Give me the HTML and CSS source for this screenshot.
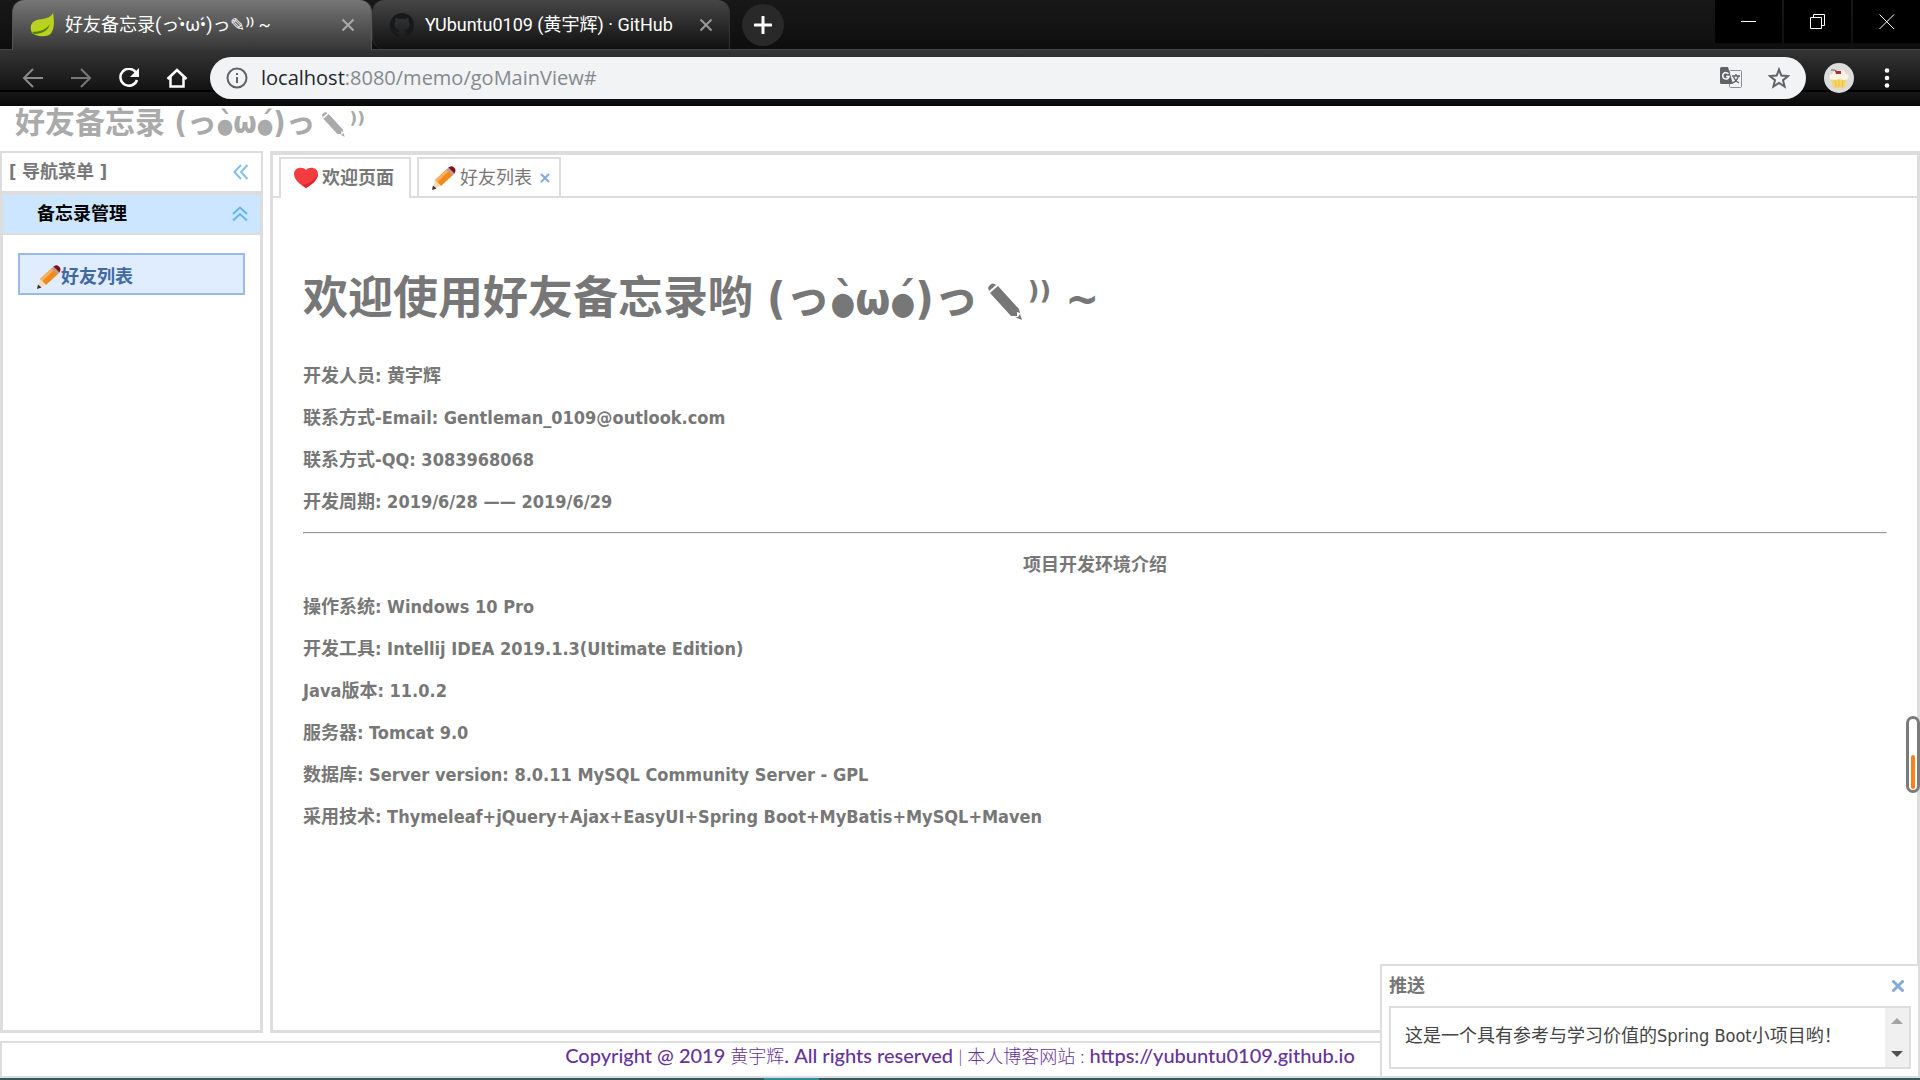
FILE: index.html
```
<!DOCTYPE html>
<html lang="zh-CN">
<head>
  <meta charset="UTF-8" />
  <title>好友备忘录</title>
  <link rel="stylesheet" href="styles.css">
</head>
<body>
  <svg class="defs">
    <symbol id="pencil" viewBox="0 0 24 24">
      <path d="M3 14 L15 3 L21 9 L9 20 Z" fill="#f08a1c"/>
      <path d="M3 14 L15 3 L17 5 L5 16.500 Z" fill="#f8b060"/>
      <path d="M3 14 L9 20 L1 23 Z" fill="#f8dcb4"/>
      <path d="M1 19.500 L4.500 22.500 L0 24 Z" fill="#3a2c30"/>
      <path d="M16 2 Q19 -1 22 1.500 Q25 4 22 8 Z" fill="#7d1216"/>
      <path d="M14.500 3.500 L16.500 1.500 L22.500 7.500 L20.500 9.500 Z" fill="#c49a94"/>
    </symbol>
    <symbol id="pencil-solid" viewBox="0 0 45 45">
      <path fill="currentColor" d="M10 11 Q8 7 11 5 Q14 2 17 5 Z M11 13 L19 6 L40 29 L41 33 L38 32 L38 36 L34 36 L32 36 Z M36 37 L39 37 L41 34 L43 40 Z"/>
    </symbol>
  </svg>

  <header class="browser">
    <div class="tab-strip">
      <div class="browser-tab active">
        <svg class="favicon" viewBox="0 0 24 24">
          <path d="M23 0 C25 10 24 20 18 22.500 C12 24 5 23 2 20 C-1 14 1 8 9 6.500 C16 5.500 20 5 23 0 Z" fill="#b9d21f"/>
          <path d="M2 19 C10 19 17 16 20 11 C18 19 10 21 4 21 Z" fill="#567f12"/>
        </svg>
        <span class="browser-title">好友备忘录(っ•̀ω•́)っ✎⁾⁾ ~</span>
        <button class="icon-button" aria-label="关闭标签页">
          <svg width="14" height="14" viewBox="0 0 14 14"><path d="M1.500 1.500 L12.500 12.500 M12.500 1.500 L1.500 12.500" stroke="#aaa" stroke-width="2"/></svg>
        </button>
      </div>
      <div class="browser-tab">
        <svg class="favicon" viewBox="0 0 16 16">
          <path fill="#17191b" d="M8 0C3.580 0 0 3.580 0 8c0 3.540 2.290 6.530 5.470 7.590.4.070.550-.170.550-.380 0-.190-.010-.820-.010-1.490-2.010.370-2.530-.490-2.690-.940-.090-.230-.480-.940-.820-1.130-.280-.150-.680-.520-.010-.530.630-.010 1.080.580 1.230.820.720 1.210 1.870.870 2.330.660.070-.520.280-.870.510-1.070-1.780-.2-3.640-.890-3.640-3.950 0-.870.310-1.590.820-2.150-.080-.2-.360-1.020.080-2.120 0 0 .670-.210 2.200.820.640-.180 1.320-.270 2-.270s1.360.090 2 .270c1.530-1.040 2.200-.820 2.200-.820.440 1.100.160 1.920.080 2.120.510.560.820 1.270.820 2.150 0 3.070-1.870 3.750-3.650 3.950.290.250.540.730.540 1.480 0 1.070-.010 1.930-.010 2.200 0 .210.150.460.550.380A8 8 0 0 0 16 8c0-4.420-3.580-8-8-8z"/>
        </svg>
        <span class="browser-title">YUbuntu0109 (黄宇辉) · GitHub</span>
        <button class="icon-button" aria-label="关闭标签页">
          <svg width="14" height="14" viewBox="0 0 14 14"><path d="M1.500 1.500 L12.500 12.500 M12.500 1.500 L1.500 12.500" stroke="#999" stroke-width="2"/></svg>
        </button>
      </div>
      <button class="new-tab" aria-label="新标签页">
        <svg width="18" height="18" viewBox="0 0 18 18"><path d="M9 1 V17 M1 9 H17" stroke="#fff" stroke-width="3" stroke-linecap="round"/></svg>
      </button>
      <div class="window-controls">
        <button aria-label="最小化"><svg width="16" height="16" viewBox="0 0 16 16"><path d="M0 7.500 H15" stroke="#fff"/></svg></button>
        <button aria-label="还原"><svg width="16" height="16" viewBox="0 0 16 16" fill="none" stroke="#fff"><path d="M0.500 3.500 H11.500 V14.500 H0.500 Z M3.500 3.500 V0.500 H14.500 V11.500 H11.500"/></svg></button>
        <button aria-label="关闭"><svg width="16" height="16" viewBox="0 0 16 16"><path d="M0.500 0.500 L15 15 M15 0.500 L0.500 15" stroke="#fff"/></svg></button>
      </div>
    </div>
    <div class="toolbar">
      <div class="tools">
        <button aria-label="后退"><svg width="22" height="20" viewBox="0 0 22 20" fill="none" stroke="#8a8a8a" stroke-width="2"><path d="M21 10 H2 M11 1 L2 10 L11 19"/></svg></button>
        <button aria-label="前进"><svg width="22" height="20" viewBox="0 0 22 20" fill="none" stroke="#777" stroke-width="2"><path d="M1 10 H20 M11 1 L20 10 L11 19"/></svg></button>
        <button aria-label="刷新"><svg width="22" height="20" viewBox="0 0 22 20"><path d="M18 4.500 A8.500 8.500 0 1 0 19 12" fill="none" stroke="#fff" stroke-width="2.500"/><path d="M21 0 V9 H12 Z" fill="#fff"/></svg></button>
        <button aria-label="主页"><svg width="22" height="20" viewBox="0 0 22 20" fill="none" stroke="#fff" stroke-width="2.500"><path d="M1.500 11 L11 2 L20.500 11 M4.500 9 V18.500 H17.500 V9"/></svg></button>
      </div>
      <div class="address">
        <svg width="22" height="22" viewBox="0 0 22 22"><circle cx="11" cy="11" r="9.500" fill="none" stroke="#5f6368" stroke-width="2"/><path d="M11 10 V16 M11 6 V8" stroke="#5f6368" stroke-width="2"/></svg>
        <div class="url"><span class="host">localhost</span>:8080/memo/goMainView#</div>
        <button class="icon-button" aria-label="翻译此页">
          <svg width="22" height="22" viewBox="0 0 22 22">
            <rect x="9.500" y="3.500" width="12" height="17" rx="1" fill="#f1f3f4" stroke="#8a8d91"/>
            <path d="M1.500 0 H8 L13 17 H1.500 Q0 17 0 15.500 V1.500 Q0 0 1.500 0 Z" fill="#5f6368"/>
            <path d="M8.500 7 A3.200 3.200 0 1 0 9 9.500 H6" fill="none" stroke="#fff" stroke-width="1.500"/>
            <path d="M12 9 H20 M16 7 V9 M18.500 9 Q17 14 12.500 16 M13.500 10 Q15 14 19 16" fill="none" stroke="#5f6368" stroke-width="1.300"/>
          </svg>
        </button>
        <button class="icon-button" aria-label="为此网页添加书签">
          <svg width="22" height="22" viewBox="0 0 22 22"><path d="M11 2.500 L13.300 8.500 L20 9 L15 13.200 L16.600 19.500 L11 16 L5.400 19.500 L7 13.200 L2 9 L8.700 8.500 Z" fill="none" stroke="#5f6368" stroke-width="2"/></svg>
        </button>
      </div>
      <button class="avatar" aria-label="用户">
        <svg width="30" height="30" viewBox="0 0 30 30">
          <circle cx="15" cy="15" r="15" fill="#dcdcdc"/>
          <path d="M7 16 H23 L20.500 25 H9.500 Z" fill="#f3d768"/>
          <path d="M11 17 L12 24 M15 17 V24 M19 17 L18 24" stroke="#e9bf45"/>
          <path d="M6 16 Q4 12 8 11 Q10 7 15 7 Q21 7 22 11 Q26 12 24 16 Q20 18 15 16 Q10 18 6 16 Z" fill="#fff3e4"/>
          <path d="M11 8 H17 V11 H12 Z" fill="#b92a35"/>
          <path d="M7 7 Q11 6 14 9" fill="none" stroke="#76544c"/>
        </svg>
      </button>
      <button aria-label="菜单"><svg width="6" height="20" viewBox="0 0 6 20" fill="#fff"><circle cx="3" cy="2.500" r="2.300"/><circle cx="3" cy="10" r="2.300"/><circle cx="3" cy="17.500" r="2.300"/></svg></button>
    </div>
  </header>

  <div class="page">
    <h1 class="page-title">好友备忘录 (っ<span class="eye">●</span>&#768;ω<span class="eye">●</span>&#769;)っ<svg class="pencil-solid"><use href="#pencil-solid"/></svg>⁾⁾</h1>

    <div class="layout">
      <nav class="west">
        <div class="panel-header">
          <span>[ 导航菜单 ]</span>
          <button class="icon-button" aria-label="折叠菜单">
            <svg width="16" height="16" viewBox="0 0 16 16" fill="none" stroke="#7fc1f2" stroke-width="2"><path d="M8 1 L1.500 8 L8 15 M14.500 1 L8 8 L14.500 15"/></svg>
          </button>
        </div>
        <div class="accordion">
          <div class="accordion-header">
            <span>备忘录管理</span>
            <button class="icon-button" aria-label="收起">
              <svg width="16" height="16" viewBox="0 0 16 16" fill="none" stroke="#66b4f0" stroke-width="2"><path d="M1 8 L8 1.500 L15 8 M1 14.500 L8 8 L15 14.500"/></svg>
            </button>
          </div>
          <a class="nav-link" href="#"><svg class="icon"><use href="#pencil"/></svg>好友列表</a>
        </div>
      </nav>

      <main class="center">
        <div class="tabs">
          <button class="tab selected">
            <svg class="icon" viewBox="0 0 24 24"><path d="M12 22 C5 18 0 13 0 8 C0 1 9 0 12 4 C15 0 24 1 24 8 C24 13 19 18 12 22 Z" fill="#f23c40"/><path d="M12 22 C19 18 24 13 24 8 C21 14 15 18 8 19 Z" fill="#dc2630"/></svg>
            欢迎页面
          </button>
          <button class="tab">
            <svg class="icon"><use href="#pencil"/></svg>
            好友列表
            <svg class="tab-close" width="10" height="10" viewBox="0 0 10 10"><path d="M1 1 L9 9 M9 1 L1 9" stroke="#85a9dc" stroke-width="2"/></svg>
          </button>
        </div>
        <div class="content">
          <h1>欢迎使用好友备忘录哟 (っ<span class="eye">●</span>&#768;ω<span class="eye">●</span>&#769;)っ<svg class="pencil-solid"><use href="#pencil-solid"/></svg>⁾⁾ ~</h1>
          <p>开发人员: 黄宇辉</p>
          <p>联系方式-Email: Gentleman_0109@outlook.com</p>
          <p>联系方式-QQ: 3083968068</p>
          <p>开发周期: 2019/6/28 —— 2019/6/29</p>
          <hr>
          <p class="section-title">项目开发环境介绍</p>
          <p>操作系统: Windows 10 Pro</p>
          <p>开发工具: Intellij IDEA 2019.1.3(UItimate Edition)</p>
          <p>Java版本: 11.0.2</p>
          <p>服务器: Tomcat 9.0</p>
          <p>数据库: Server version: 8.0.11 MySQL Community Server - GPL</p>
          <p>采用技术: Thymeleaf+jQuery+Ajax+EasyUI+Spring Boot+MyBatis+MySQL+Maven</p>
        </div>
      </main>
    </div>

    <footer class="footer">
      <a href="#">Copyright @ 2019 <span class="thin">黄宇辉</span>. All rights reserved <span class="thin">| 本人博客网站 :</span> https://yubuntu0109.github.io</a>
    </footer>

    <section class="message">
      <div class="message-header">
        <span>推送</span>
        <button class="icon-button" aria-label="关闭">
          <svg width="12" height="12" viewBox="0 0 12 12"><path d="M1.500 1.500 L10.500 10.500 M10.500 1.500 L1.500 10.500" stroke="#85a9dc" stroke-width="3" stroke-linecap="round"/></svg>
        </button>
      </div>
      <div class="message-body">
        <p>这是一个具有参考与学习价值的Spring Boot小项目哟！</p>
        <div class="scroller">
          <button class="icon-button" aria-label="向上滚动"><svg width="12" height="6" viewBox="0 0 12 6"><path d="M0 6 L6 0 L12 6 Z" fill="#a3a3a3"/></svg></button>
          <button class="icon-button" aria-label="向下滚动"><svg width="12" height="6" viewBox="0 0 12 6"><path d="M0 0 H12 L6 6 Z" fill="#505050"/></svg></button>
        </div>
      </div>
    </section>

    <div class="gauge"><div class="gauge-fill"></div></div>
  </div>

  <div class="taskbar"><div class="taskbar-active"></div></div>
</body>
</html>
```
FILE: styles.css
```
* {
  box-sizing: border-box;
}

body {
  display: flex;
  flex-direction: column;
  height: 100vh;
  margin: 0;
  overflow: hidden;
  background: #fff;
  color: #777;
  font-family: "DejaVu Sans Condensed", "Noto Sans CJK SC", sans-serif;
  font-size: 18px;
  line-height: 24px;
}

button {
  padding: 0;
  border: none;
  background: none;
  color: inherit;
  font: inherit;
  cursor: pointer;
}

svg {
  display: block;
  flex: none;
}

.defs {
  position: absolute;
  width: 0;
  height: 0;
}

.icon,
.favicon {
  width: 24px;
  height: 24px;
}

.pencil-solid {
  display: inline-block;
  width: 1em;
  height: 1em;
  margin-right: 4px;
  vertical-align: text-bottom;
}

.eye {
  font-size: 70%;
  line-height: 0;
}

.icon-button {
  display: flex;
}

/* browser window */
.browser {
  flex: none;
  background: #111;
}

.tab-strip {
  display: flex;
  height: 50px;
  padding-left: 12px;
  background: linear-gradient(#181818, #0e0e0e);
  border-bottom: 1px solid #444;
}

.browser-tab {
  display: flex;
  align-items: center;
  gap: 11px;
  width: 358px;
  height: 49px;
  padding: 0 16px 0 17px;
  border: 1px solid #333;
  border-width: 0 1px;
  border-radius: 12px 12px 0 12px;
  background: linear-gradient(#464646, #101010);
  color: #fff;
}

.browser-tab.active {
  width: 360px;
  height: 50px;
  border-color: #555;
  border-radius: 12px 12px 0 0;
  background: linear-gradient(#767676, #363636);
}

.browser-title {
  flex: 1;
  font-family: Roboto, "Noto Sans CJK SC", sans-serif;
  white-space: nowrap;
}

.new-tab {
  display: flex;
  align-items: center;
  justify-content: center;
  width: 42px;
  height: 42px;
  margin: 4px 0 0 12px;
  border-radius: 50%;
  background: #292929;
}

.window-controls {
  display: flex;
  gap: 2px;
  height: 43px;
  margin-left: auto;
}

.window-controls button {
  display: flex;
  align-items: center;
  justify-content: center;
  width: 67px;
  background: #000;
}

.toolbar {
  display: flex;
  align-items: center;
  height: 56px;
  padding: 0 30px 0 22px;
  background: linear-gradient(#343434, #131313 40px, #000 40px, #000 42px, #171717 42px, #080808);
}

.tools {
  display: flex;
  gap: 26px;
  margin-right: 22px;
}

.address {
  display: flex;
  flex: 1;
  align-items: center;
  gap: 26px;
  height: 42px;
  margin-right: 18px;
  padding: 0 16px;
  border-radius: 21px;
  background: #f1f3f5;
}

.address > svg {
  margin-right: -13px;
}

.url {
  flex: 1;
  color: #85898d;
  font-family: "Open Sans", sans-serif;
  font-size: 20px;
}

.host {
  color: #24272b;
}

.avatar {
  margin-right: 30px;
}

/* page */
.page {
  position: relative;
  display: flex;
  flex: 1;
  flex-direction: column;
  min-height: 0;
}

.page-title {
  height: 45px;
  margin: 0;
  padding-left: 15px;
  color: #aaa;
  font-size: 30px;
  line-height: 34px;
  white-space: nowrap;
}

.layout {
  display: flex;
  flex: 1;
  gap: 7px;
  min-height: 0;
}

.west {
  display: flex;
  flex-direction: column;
  width: 263px;
}

.panel-header {
  display: flex;
  align-items: center;
  justify-content: space-between;
  height: 42px;
  padding: 0 12px 0 7px;
  border: 2px solid #ddd;
  font-weight: bold;
}

.accordion {
  flex: 1;
  border: 3px solid #ddd;
  border-top-width: 2px;
}

.accordion-header {
  display: flex;
  align-items: center;
  justify-content: space-between;
  height: 40px;
  padding: 0 12px 0 34px;
  border-bottom: 2px solid #ddd;
  background: #cce6ff;
  color: #000;
  font-weight: bold;
}

.nav-link {
  display: flex;
  align-items: center;
  height: 42px;
  margin: 18px 15px;
  padding: 5px 0 0 17px;
  border: 2px solid #99bbe8;
  background: #e0ecff;
  color: #416aa3;
  font-weight: bold;
  text-decoration: none;
}

.center {
  flex: 1;
  border: 3px solid #ddd;
  border-top-width: 4px;
}

.tabs {
  display: flex;
  gap: 6px;
  height: 43px;
  padding: 2px 0 0 6px;
  border-bottom: 2px solid #ddd;
}

.tab {
  display: flex;
  align-items: center;
  gap: 4px;
  padding: 0 9px 0 13px;
  border: 2px solid #ddd;
  border-bottom: none;
}

.tab-close {
  margin-left: 4px;
}

.tab.selected {
  margin-bottom: -2px;
  padding: 0 15px 2px 13px;
  background: #fff;
  font-weight: bold;
}

.content {
  padding: 0 30px;
  font-weight: bold;
}

.content h1 {
  margin: 0;
  padding: 71px 0 35px;
  font-size: 45px;
  line-height: 60px;
}

.content p {
  margin: 0 0 18px;
}

.content hr {
  margin: 0 0 19px;
}

.content .section-title {
  text-align: center;
}

.footer {
  height: 37px;
  margin-top: 8px;
  border: 2px solid #ddd;
  text-align: center;
}

.footer a {
  color: #663399;
  font-family: Lato, "Noto Sans CJK SC", sans-serif;
  font-size: 20px;
  font-weight: 500;
  text-decoration: none;
}

.footer .thin {
  font-size: 18px;
  font-weight: 300;
}

.message {
  position: absolute;
  right: 0;
  bottom: 0;
  width: 540px;
  padding: 0 7px 7px;
  border: 2px solid #ddd;
  background: #fff;
}

.message-header {
  display: flex;
  align-items: center;
  justify-content: space-between;
  height: 40px;
  padding-right: 7px;
  font-weight: bold;
}

.message-body {
  display: flex;
  justify-content: space-between;
  height: 63px;
  border: 2px solid #ddd;
  color: #444;
}

.message-body p {
  margin: 0;
  padding: 16px 14px;
}

.scroller {
  display: flex;
  flex-direction: column;
  justify-content: space-between;
  width: 24px;
  padding: 10px 6px;
  background: #f0f0f0;
}

.gauge {
  position: absolute;
  right: 0;
  top: 610px;
  display: flex;
  align-items: flex-end;
  width: 14px;
  height: 77px;
  padding: 1px 2px;
  border: 3px solid #7b7b7b;
  border-radius: 7px;
  background: #fff;
}

.gauge-fill {
  width: 100%;
  height: 34px;
  border-radius: 2px;
  background: #ff7f1a;
}

.taskbar {
  flex: none;
  height: 2px;
  padding-left: 764px;
  background: #305c61;
}

.taskbar-active {
  width: 55px;
  height: 2px;
  background: #2e8c98;
}
```
